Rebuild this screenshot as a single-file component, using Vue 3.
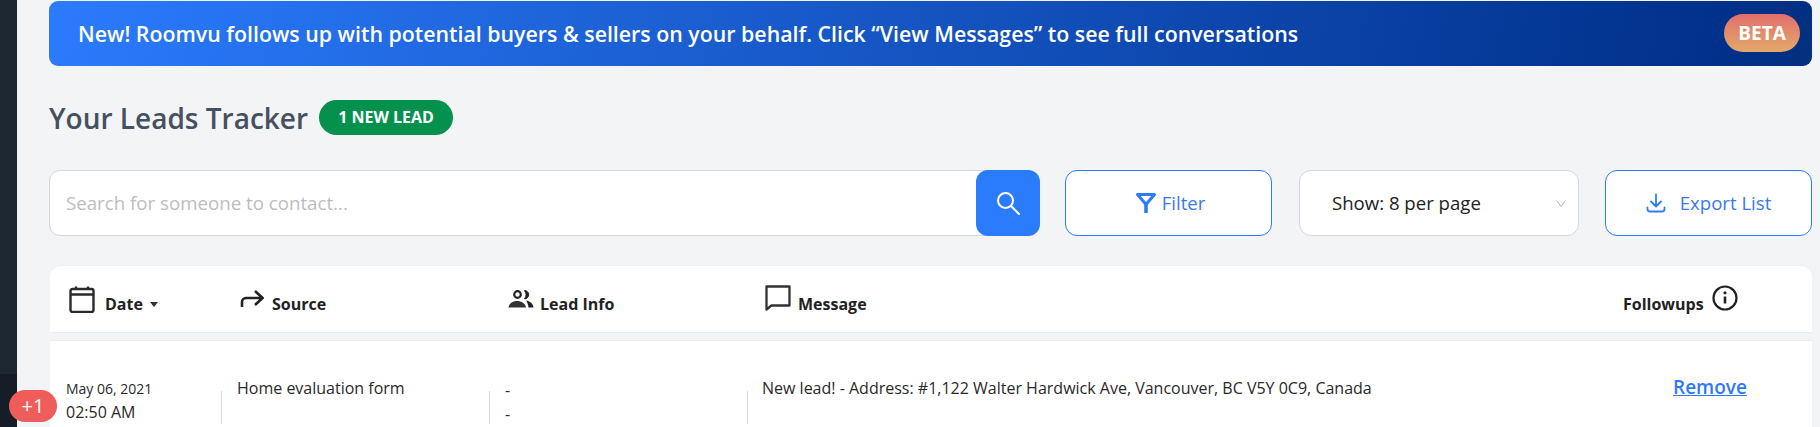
<script setup>
const columns = ['Date', 'Source', 'Lead Info', 'Message']
</script>

<template>
  <div class="page">
    <aside class="rail"><div class="rail-top"></div><div class="rail-bottom"></div></aside>
    <span class="counter">+1</span>
    <main class="main">
      <section class="banner">
        <p class="banner-text">New! Roomvu follows up with potential buyers &amp; sellers on your behalf. Click “View Messages” to see full conversations</p>
        <span class="beta">BETA</span>
      </section>

      <div class="title-row">
        <h1 class="title">Your Leads Tracker</h1>
        <span class="new-lead">1 NEW LEAD</span>
      </div>

      <div class="toolbar">
        <div class="search">
          <span class="placeholder">Search for someone to contact...</span>
          <button class="search-btn" aria-label="Search">
            <svg width="26" height="26" viewBox="0 0 26 26" fill="none" stroke="#fff" stroke-width="2"><circle cx="10.500" cy="10.500" r="7.500"/><path d="M16 16l8 8" stroke-linecap="round"/></svg>
          </button>
        </div>
        <button class="outline filter">
          <svg width="22" height="22" viewBox="0 0 22 22" fill="none" stroke="#2f7bff" stroke-width="3"><path d="M2.500 2.500h17L11 12.500z" stroke-linejoin="round"/><path d="M11 11v10" stroke-width="3.600"/></svg>
          <span>Filter</span>
        </button>
        <div class="select">
          <span>Show: 8 per page</span>
          <svg width="12" height="12" viewBox="0 0 12 12" fill="none" stroke="#b0b4bc" stroke-width="1"><path d="M1.500 3.500L6 9.500l4.500-6"/></svg>
        </div>
        <button class="outline export">
          <svg width="20" height="20" viewBox="0 0 20 20" fill="none" stroke="#2f7bff" stroke-width="1.800" stroke-linecap="round" stroke-linejoin="round"><path d="M10 1.500v11.500M5 8.500l5 5 5-5M1.500 14.500v1.500a2.500 2.500 0 0 0 2.500 2.500h12a2.500 2.500 0 0 0 2.500-2.500v-1.500"/></svg>
          <span>Export List</span>
        </button>
      </div>

      <div class="thead">
        <div class="th">
          <svg class="cal" width="26" height="27" viewBox="0 0 26 27" fill="none" stroke="#2a2a2a" stroke-width="2.400"><rect x="1.500" y="3" width="23" height="23" rx="2"/><path d="M1.500 8.500h23M7 .5v3M19 .5v3"/></svg>
          <b class="date-label">{{ columns[0] }}</b>
          <i class="caret"></i>
        </div>
        <div class="th">
          <svg class="src" width="24" height="17" viewBox="0 0 24 17" fill="none" stroke="#222" stroke-width="2.600"><path d="M2 17v-5a4 4 0 0 1 4-4h16M15 1l7.500 7-7.500 7"/></svg>
          <b>{{ columns[1] }}</b>
        </div>
        <div class="th">
          <svg class="src" width="26" height="18" viewBox="0 0 26 18" fill="none"><circle cx="9.500" cy="4.500" r="3.300" stroke="#222" stroke-width="2.200"/><path d="M16.500 .5a4.200 4.200 0 0 1 0 8.400A7 7 0 0 0 16.500 .5z" fill="#222" stroke="#222"/><path d="M.5 17.500c.5-4 4-6.500 8.500-6.500s8.500 2.500 9 6.500z" fill="#333"/><path d="M18 10.500c4 .5 7 3 7.500 7h-5c-.3-3-1-5-2.500-7z" fill="#222"/></svg>
          <b>{{ columns[2] }}</b>
        </div>
        <div class="th">
          <svg class="msg" width="26" height="26" viewBox="0 0 26 26" fill="none" stroke="#333" stroke-width="2.300"><path d="M1.500 1.500h23v19H6.500L1.500 24.500z" stroke-linejoin="round"/></svg>
          <b>{{ columns[3] }}</b>
        </div>
        <div class="th follow">
          <b>Followups</b>
          <svg class="msg" width="26" height="26" viewBox="0 0 26 26" fill="none"><circle cx="13" cy="13" r="11.500" stroke="#222" stroke-width="2.200"/><path d="M13 11.500v7" stroke="#222" stroke-width="2.600"/><circle cx="13" cy="7.800" r="1.600" fill="#222"/></svg>
        </div>
      </div>

      <div class="row">
        <div class="cell date">
          <div class="day">May 06, 2021</div>
          <div class="time">02:50 AM</div>
        </div>
        <div class="cell source">Home evaluation form</div>
        <div class="cell lead"><div>-</div><div>-</div></div>
        <div class="cell message">New lead! - Address: #1,122 Walter Hardwick Ave, Vancouver, BC V5Y 0C9, Canada</div>
        <div class="cell action"><a href="#" class="remove">Remove</a></div>
      </div>
    </main>
  </div>
</template>

<style>
html, body { margin: 0; background: #f3f4f6; overflow: hidden; }
</style>

<style scoped>
.page {
  position: relative;
  display: flex;
  height: 427px;
  overflow: hidden;
  font-family: "Open Sans", "Noto Sans", sans-serif;
  color: #222;
  background: #f3f4f6;
}
.rail { width: 17px; flex: none; display: flex; flex-direction: column; }
.rail-top { height: 374px; background: #1e2833; }
.rail-bottom { flex: 1; background: #151d26; }
.counter {
  position: absolute; left: 9px; top: 390px; width: 48px; height: 32px;
  border-radius: 16px; background: #ef5d5a; color: #fff;
  font-size: 20px; line-height: 32px; text-align: center;
}
.main { flex: 1; min-width: 0; padding: 1px 8px 0 32px; }

.banner {
  height: 64.500px; border-radius: 9px; display: flex; align-items: center;
  justify-content: space-between; padding: 0 12px 0 29px;
  background: linear-gradient(100deg, #2b7bfd 0%, #00308a 95%, #03307f 100%);
}
.banner-text { margin: 0; color: #fff; font-size: 21.330px; font-weight: 600; }
.beta {
  height: 38px; border-radius: 19px; display: flex; align-items: center; justify-content: center;
  width: 76px; font-size: 19px; font-weight: 700; color: #fff;
  background: linear-gradient(180deg, #e26f6c, #e2a96a);
}

.title-row { display: flex; align-items: center; gap: 11px; margin-top: 34px; height: 35px; }
.title { margin: 2px 0 0; font-size: 28px; font-weight: 600; color: #46505e; }
.new-lead {
  width: 134px; height: 35px; border-radius: 18px; background: #03914d; color: #fff;
  font-size: 16px; font-weight: 700; display: flex; align-items: center; justify-content: center;
}

.toolbar { display: flex; align-items: stretch; height: 65.500px; margin-top: 35.500px; }
.search {
  width: 991px; box-sizing: border-box; border: 1px solid #d3d6e4; border-radius: 11px; background: #fff;
  display: flex; align-items: center; justify-content: space-between;
}
.placeholder { margin-left: 16px; font-size: 18.700px; color: #bdbdbd; }
.search-btn {
  width: 64px; height: 65.500px; margin: -1px; border: 0; border-radius: 12px;
  background: #2b7bfd; display: flex; align-items: center; justify-content: center;
}
.outline {
  box-sizing: border-box; width: 207px; border: 1px solid #2b7bfd; border-radius: 12px; background: #fff;
  color: #3a78f2; font: inherit; font-size: 18.600px; display: flex; align-items: center; justify-content: center;
}
.filter { margin-left: 25px; gap: 5px; padding-left: 9px; }
.export { margin-left: 26px; gap: 14px; }
.select {
  box-sizing: border-box; width: 280px; margin-left: 27px; border: 1px solid #d3d6e4; border-radius: 12px; background: #fff;
  display: flex; align-items: center; justify-content: space-between; padding: 0 11px 0 32px; font-size: 18.600px; color: #222;
}

.thead {
  display: grid; grid-template-columns: 171px 268px 257px 858px 1fr; align-items: center;
  box-sizing: border-box; height: 68px; margin-top: 29px; padding-left: 19px; margin-left: 1px;
  background: #fff; border-radius: 12px 12px 0 0; border-bottom: 1px solid #e8eef7; border-top: 1px solid #edf2f9;
}
.th { display: flex; align-items: center; gap: 8px; font-size: 16px; }
.th b { font-weight: 700; color: #222; transform: translateY(5px); }
.cal { transform: translateY(1px); }
.msg { transform: translateY(-1px); }
.date-label { margin-left: 3px; }
.th:first-child { gap: 7px; }
.th:nth-child(3) { gap: 6px; }
.th:nth-child(4) { gap: 7px; }
.caret { width: 0; height: 0; border: 4.500px solid transparent; border-top: 5px solid #333; border-bottom: 0; transform: translateY(6px); }

.row {
  display: grid; grid-template-columns: 171px 268px 257px 910px 1fr;
  box-sizing: border-box; height: 90px; margin-top: 7px; margin-left: 1px; padding: 37px 0 0 16px;
  background: #fff; border-top: 1px solid #e8eef7; font-size: 16px;
}
.cell { position: relative; line-height: 20px; color: #2a2a2a; }
.cell::after { content: ""; position: absolute; top: 13px; height: 33px; width: 1px; background: #dcdcdc; right: 15px; }
.action::after { display: none; }
.message::after { display: none; }
.lead::after { right: 14px; }
.date { margin-top: -1px; }
.date::after { top: 14px; }
.day { font-size: 14px; line-height: 23px; }
.time { font-size: 16px; line-height: 24px; }
.lead div { line-height: 24px; }
.remove { color: #2f78fb; font-size: 19px; font-weight: 600; text-decoration: underline; margin-left: 1px; position: relative; top: -1px; }
</style>
